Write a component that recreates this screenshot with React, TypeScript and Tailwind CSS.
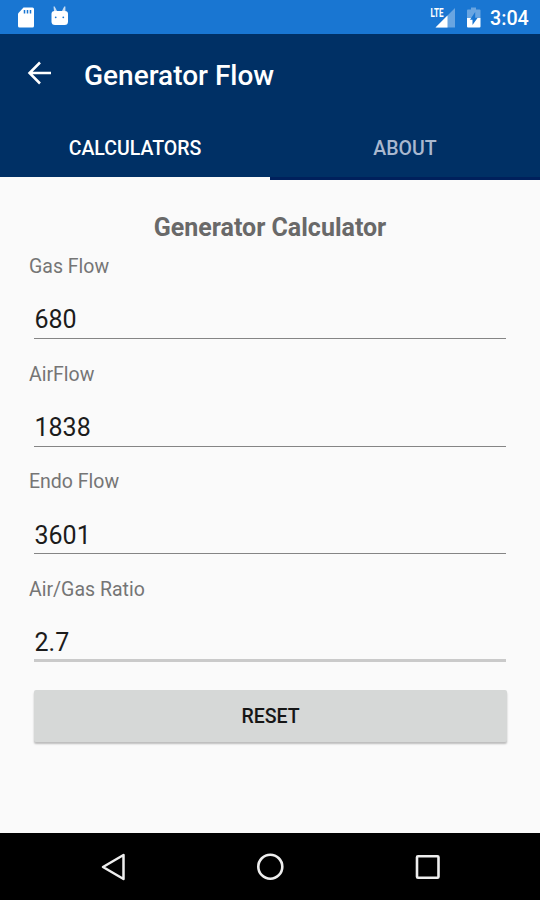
import { useState } from "react";

const FIELDS = [
  { name: "gasFlow", label: "Gas Flow", value: "680", line: "border-b border-[#858585] pt-[2px]" },
  { name: "airFlow", label: "AirFlow", value: "1838", line: "border-b border-[#858585] pt-[3px]" },
  { name: "endoFlow", label: "Endo Flow", value: "3601", line: "border-b border-[#858585] pt-[3px]" },
  { name: "ratio", label: "Air/Gas Ratio", value: "2.7", line: "border-b-3 border-[#cacaca] pt-[5px]" },
];

const INITIAL = Object.fromEntries(FIELDS.map((field) => [field.name, field.value]));

function StatusBar() {
  return (
    <div className="flex h-[34px] shrink-0 items-center bg-[#1976d2] pr-[11px] pl-[17px] text-white">
      <svg width="18" height="22" viewBox="0 0 18 22" fill="none">
        <path d="M6.500 1.500h9A1.500 1.500 0 0 1 17 3v17a1.500 1.500 0 0 1-1.500 1.500h-13A1.500 1.500 0 0 1 1 20V7.500z" fill="white" />
        <path d="M7.500 4v3.500M10.500 4v3.500M13.500 4v3.500" stroke="#1976d2" strokeWidth="1.500" />
      </svg>
      <svg className="ml-[15px]" width="20" height="24" viewBox="0 0 20 24" fill="none">
        <path d="M3.500 1.500h1.200l2.300 4.500H4zM14.200 1.500h1.200V6h-3.400z" fill="white" fillOpacity="0.75" />
        <path d="M1.500 9q0-3 3-3h10.500q3 0 3 3v7.500q0 3.500-3.500 3.500H5q-3.500 0-3.500-3.500z" fill="white" />
        <circle cx="5.700" cy="12.300" r="0.900" fill="#1976d2" />
        <circle cx="13.300" cy="12.300" r="0.900" fill="#1976d2" />
      </svg>

      <div className="ml-auto flex items-center">
        <svg width="27" height="24" viewBox="0 0 27 24">
          <path d="M26 3v19.500H6.500z" fill="white" fillOpacity="0.35" />
          <path d="M18.500 10.500v12h-12z" fill="white" />
          <text
            x="1.500"
            y="11.500"
            textLength="13"
            lengthAdjust="spacingAndGlyphs"
            className="font-[Roboto] text-[12.500px] font-bold"
            fill="white"
          >
            LTE
          </text>
        </svg>
        <svg className="ml-[10px]" width="16" height="22" viewBox="0 0 16 22">
          <path d="M5 1.500h5v2h3.500q1 0 1 1V12H1V4.500q0-1 1-1h3z" fill="white" fillOpacity="0.35" />
          <path d="M1 12h13.500v8.500q0 1-1 1H2q-1 0-1-1z" fill="white" />
          <path d="M9.200 6v5.800h2.500L6.500 19v-5.200H4z" fill="#1976d2" />
        </svg>
        <span className="ml-[8px] w-[39px] pt-[3px] text-[19.700px] leading-none font-medium whitespace-nowrap">
          3:04
        </span>
      </div>
    </div>
  );
}

function Header() {
  return (
    <header className="flex h-[146px] shrink-0 flex-col bg-[#003065] text-white">
      <div className="flex h-[80px] items-center pl-[27px]">
        <svg className="-mt-0.5" width="25" height="24" viewBox="0 0 25 24" fill="none" stroke="white" strokeWidth="2.500">
          <path d="M24 12H2.500M13 1.500L2.500 12L13 22.500" />
        </svg>
        <h1 className="ml-[32px] pt-[3px] text-[28px] leading-none font-medium">Generator Flow</h1>
      </div>
      <div className="grid flex-1 grid-cols-2 text-[19.500px] font-medium">
        <button className="border-b-3 border-[#fafafa] pt-[6px]">CALCULATORS</button>
        <button className="border-b-3 border-[#00205c] pt-[6px] text-[#a9b8cf]">ABOUT</button>
      </div>
    </header>
  );
}

function NavBar() {
  return (
    <nav className="flex h-[67px] shrink-0 items-center justify-between bg-black px-[99px]">
      <svg width="28" height="30" viewBox="0 0 28 30" fill="none" stroke="#eeeeee" strokeWidth="2.500" strokeLinejoin="round">
        <path d="M24.500 3v24L4 15z" />
      </svg>
      <svg width="30" height="30" viewBox="0 0 30 30" fill="none" stroke="#eeeeee" strokeWidth="2.600">
        <circle cx="15.300" cy="14.700" r="12" />
      </svg>
      <svg width="28" height="30" viewBox="0 0 28 30" fill="none" stroke="#eeeeee" strokeWidth="2.600">
        <rect x="4" y="4.200" width="21.500" height="21.500" rx="1" />
      </svg>
    </nav>
  );
}

export default function App() {
  const [values, setValues] = useState<Record<string, string>>(INITIAL);

  return (
    <div className="flex h-[900px] w-[540px] flex-col overflow-hidden bg-[#fafafa] font-[Roboto,sans-serif]">
      <StatusBar />
      <Header />

      <main className="flex flex-1 flex-col px-[29px] pt-[33px]">
        <h2 className="text-center text-[25px] leading-[30px] font-bold text-[#696969]">Generator Calculator</h2>

        {FIELDS.map((field) => (
          <label key={field.name} className="flex h-[107.500px] flex-col">
            <span className="pt-[12px] text-[19.500px] leading-[24px] text-[#757575]">{field.label}</span>
            <input
              className={`mt-[20px] ml-[5px] h-[40px] w-[472px] pl-[0.500px] text-[25px] text-[#1c1c1c] outline-none ${field.line}`}
              value={values[field.name] ?? ""}
              onChange={(e) => setValues({ ...values, [field.name]: e.target.value })}
            />
          </label>
        ))}

        <button
          className="mt-[17px] ml-[5px] h-[52px] w-[473px] rounded-[2px] bg-[#d6d8d7] pt-[2px] text-[19.500px] font-medium text-[#161616] shadow-[0_2px_2px_rgba(0,0,0,0.25)]"
          onClick={() => setValues({})}
        >
          RESET
        </button>
      </main>

      <NavBar />
    </div>
  );
}
